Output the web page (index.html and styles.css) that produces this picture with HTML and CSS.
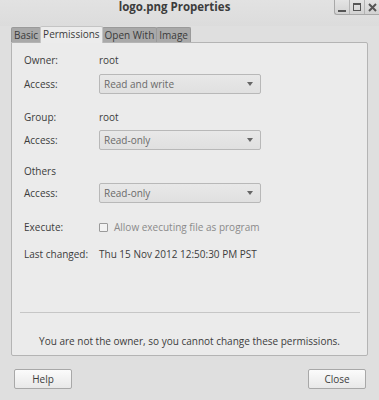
FILE: index.html
```html
<!DOCTYPE html>
<html>
<head>
  <meta charset="UTF-8">
  <title>logo.png Properties</title>
  <link rel="stylesheet" href="styles.css">
</head>
<body>
  <div class="window">
    <div class="titlebar">
      <div class="title">logo.png Properties</div>
      <div class="controls">
        <span class="ctl ctl-min"></span>
        <span class="ctl ctl-max"></span>
        <span class="ctl ctl-close">
          <svg width="9" height="9" viewBox="0 0 9 9"><path d="M1 1L8 8M8 1L1 8" stroke="#555" stroke-width="2"/></svg>
        </span>
      </div>
    </div>

    <div class="tabs">
      <div class="tab">Basic</div>
      <div class="tab active">Permissions</div>
      <div class="tab">Open With</div>
      <div class="tab">Image</div>
    </div>

    <div class="panel">
      <div class="row owner"><span class="label">Owner:</span><span class="value">root</span></div>
      <div class="row access-1"><span class="label">Access:</span><div class="combo">Read and write<span class="arrow"></span></div></div>

      <div class="row group"><span class="label">Group:</span><span class="value">root</span></div>
      <div class="row access-2"><span class="label">Access:</span><div class="combo">Read-only<span class="arrow"></span></div></div>

      <div class="row others"><span class="label">Others</span></div>
      <div class="row access-3"><span class="label">Access:</span><div class="combo">Read-only<span class="arrow"></span></div></div>

      <div class="row execute"><span class="label">Execute:</span><span class="check"></span><span class="muted">Allow executing file as program</span></div>
      <div class="row changed"><span class="label">Last changed:</span><span class="value">Thu 15 Nov 2012 12:50:30 PM PST</span></div>

      <div class="spacer"></div>
      <div class="separator"></div>
      <div class="note">You are not the owner, so you cannot change these permissions.</div>
    </div>

    <div class="actions">
      <button class="btn">Help</button>
      <button class="btn">Close</button>
    </div>
  </div>
</body>
</html>
```

FILE: styles.css
```css
body {
  margin: 0;
  background: #dcdcdc;
  font-family: "Open Sans", "DejaVu Sans", sans-serif;
  font-size: 10px;
  color: #3c3c3c;
}
.window {
  width: 379px;
  height: 400px;
  display: flex;
  flex-direction: column;
  background: #dfdfdf;
}
.titlebar {
  height: 26px;
  position: relative;
  background: linear-gradient(#e2e2e2, #dcdcdc);
}
.title {
  text-align: center;
  font-weight: bold;
  font-size: 11.5px;
  color: #3c3c3c;
  line-height: 14px;
  padding-right: 30px;
}
.controls {
  position: absolute;
  top: 0;
  right: 0;
  display: flex;
  height: 14px;
  border: 1px solid #a8a8a8;
  border-top: none;
  border-right: none;
  border-radius: 0 0 0 3px;
  background: linear-gradient(#e4e4e4, #d2d2d2);
}
.ctl {
  width: 14px;
  height: 14px;
  border-left: 1px solid #b4b4b4;
  display: flex;
  align-items: center;
  justify-content: center;
}
.ctl:first-child {
  border-left: none;
}
.ctl-min::after {
  content: "";
  width: 8px;
  height: 2px;
  background: #555;
  margin-top: 8px;
}
.ctl-max::after {
  content: "";
  width: 6px;
  height: 5px;
  border: 1px solid #555;
  border-top-width: 2px;
}
.tabs {
  display: flex;
  padding-left: 11px;
  height: 16px;
  align-items: flex-end;
}
.tab {
  height: 14px;
  line-height: 14px;
  padding: 0 2px;
  background: #a9a9a9;
  border: 1px solid #9a9a9a;
  border-bottom: none;
  border-radius: 2px 2px 0 0;
  color: #3a3a3a;
  margin-right: -1px;
}
.tab.active {
  height: 16px;
  line-height: 15px;
  background: #ececec;
  border-color: #c4c4c4;
  position: relative;
  z-index: 1;
  margin-bottom: -1px;
}
.panel {
  box-sizing: border-box;
  margin: 0 11px;
  height: 314px;
  border: 1px solid #b4b4b4;
  border-radius: 0 2px 2px 2px;
  background: #ebebeb;
  padding: 0 8px 0 12px;
  display: flex;
  flex-direction: column;
}
.row {
  display: flex;
  align-items: center;
  height: 20px;
  flex-shrink: 0;
}
.owner { margin-top: 7px; }
.access-1 { margin-top: 4px; }
.group { margin-top: 13px; }
.access-2 { margin-top: 3px; }
.others { margin-top: 11px; }
.access-3 { margin-top: 2px; }
.execute { margin-top: 14px; }
.changed { margin-top: 7px; }
.label {
  width: 75px;
}
.combo {
  box-sizing: border-box;
  width: 162px;
  height: 20px;
  border: 1px solid #b8b8b8;
  border-radius: 2px;
  background: linear-gradient(#e8e8e8, #e0e0e0);
  padding-left: 4px;
  display: flex;
  align-items: center;
  justify-content: space-between;
  color: #6a6a6a;
}
.arrow {
  width: 0;
  height: 0;
  border-left: 3px solid transparent;
  border-right: 3px solid transparent;
  border-top: 4px solid #666;
  margin-right: 7px;
}
.check {
  width: 7px;
  height: 7px;
  border: 1px solid #9a9a9a;
  border-radius: 1px;
  background: #f2f2f2;
  margin-right: 6px;
}
.muted {
  color: #8a8a8a;
}
.spacer {
  flex: 1;
}
.separator {
  height: 1px;
  background: #c6c6c6;
  margin: 0 -1px 0 -4px;
}
.note {
  text-align: center;
  line-height: 14px;
  margin: 21px 0 7px;
  padding-right: 4px;
}
.actions {
  display: flex;
  justify-content: space-between;
  padding: 13px 13px 0 14px;
}
.btn {
  width: 58px;
  height: 20px;
  border: 1px solid #a8a8a8;
  border-radius: 2px;
  background: linear-gradient(#fbfbfb, #e8e8e8);
  font-family: inherit;
  font-size: 10px;
  color: #3c3c3c;
  padding: 0;
}
```
